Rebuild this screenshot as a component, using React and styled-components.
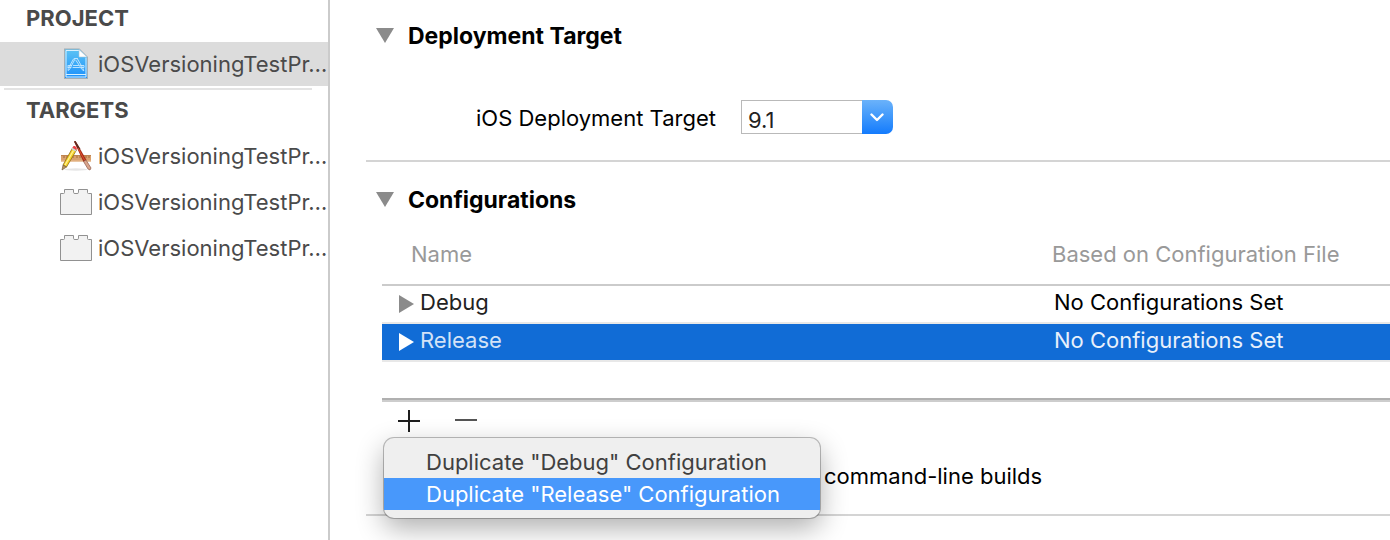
import React from "react";
import styled, { createGlobalStyle, css } from "styled-components";

const GlobalStyle = createGlobalStyle`
  * { box-sizing: border-box; }
  body {
    margin: 0;
    background: #fff;
    color: #000;
    font: 22px/28px Inter, "Liberation Sans", sans-serif;
    overflow: hidden;
  }
  button, input { font: inherit; color: inherit; }
`;

const Window = styled.div`
  display: grid;
  grid-template-columns: 330px 1fr;
  min-height: 100vh;
`;

/* Sidebar */

const Sidebar = styled.nav`
  border-right: 2px solid #cbcbcb;
  color: #4a4a4a;
`;

const SidebarHeading = styled.h2`
  margin: 0;
  padding: 4px 26px;
  font-size: 22px;
  line-height: 28px;
  font-weight: 700;
`;

const SidebarList = styled.ul`
  list-style: none;
  margin: 0;
  padding: 6px 0 0;
  display: grid;
  gap: 2px;
`;

const SidebarItem = styled.a`
  display: flex;
  align-items: center;
  gap: 6px;
  height: 44px;
  padding-left: 60px;
  color: inherit;
  text-decoration: none;
  white-space: nowrap;
  background: ${(p) => (p.$selected ? "#dcdcdc" : "transparent")};

  svg { flex: none; }
`;

const SidebarRule = styled.hr`
  height: 2px;
  margin: 2px 16px 2px 4px;
  border: 0;
  background: #e3e3e3;
`;

/* Editor */

const Editor = styled.main`
  min-width: 0;
  padding: 22px 0 0 36px;
`;

const Section = styled.section`
  border-bottom: 2px solid #d4d4d4;

  & + & { padding-top: 24px; }
`;

const SectionHeading = styled.h3`
  display: flex;
  align-items: center;
  gap: 14px;
  margin: 0;
  padding-left: 10px;
  font-size: 23px;
  line-height: 28px;
  font-weight: 700;
`;

const Field = styled.div`
  display: flex;
  align-items: center;
  gap: 24px;
  padding: 50px 0 26px 110px;
`;

const FieldLabel = styled.label`
  padding: 2px 1px 0 0;
`;

const ComboBox = styled.div`
  display: flex;
  width: 152px;
  height: 34px;
`;

const ComboInput = styled.input`
  flex: 1;
  min-width: 0;
  padding: 6px 6px 0;
  border: 1px solid #b9b9b9;
  border-right: 0;
  border-radius: 0;
  outline: none;
  color: #222;
  background: #fff;
`;

const ComboButton = styled.button`
  display: grid;
  place-items: center;
  width: 31px;
  padding: 0;
  border: 0;
  border-radius: 0 7px 7px 0;
  background: linear-gradient(#6bb2fa, #3f98fb 50%, #147bfd);
`;

const ConfigTable = styled.table`
  width: calc(100% - 16px);
  margin: 10px 0 0 16px;
  border-collapse: separate;
  border-spacing: 0;
  table-layout: fixed;
  border-bottom: 2px solid #cdcdcd;
`;

const HeaderCell = styled.th`
  width: ${(p) => (p.$name ? "641px" : "auto")};
  height: 62px;
  padding: 0 0 0 29px;
  border-bottom: 2px solid #cbcbcb;
  color: #999;
  font-weight: 400;
  text-align: left;
  white-space: nowrap;
`;

const selectedRow = css`
  background: #116cd6;
  color: #e8f0fb;
`;

const ConfigRow = styled.tr`
  ${(p) => p.$selected && selectedRow}
`;

const NameCell = styled.td`
  height: 38px;
  padding: 0 0 4px 16px;
  border-bottom: 2px solid #e8e8e8;

  &:empty { border-bottom-color: #b0b0b0; }
`;

const FileCell = styled(NameCell)`
  padding-left: 31px;
`;

const NameLabel = styled.span`
  display: flex;
  align-items: center;
  gap: 6px;
  color: ${(p) => (p.$selected ? "#d3e2f7" : "#222")};

  svg { margin-top: 3px; }
`;

const TableActions = styled.div`
  position: relative;
  display: flex;
  gap: 33px;
  padding: 7px 0 0 31px;
`;

const IconButton = styled.button`
  display: grid;
  place-items: center;
  width: 24px;
  height: 24px;
  padding: 0;
  border: 0;
  background: none;
`;

const Menu = styled.div`
  position: absolute;
  top: 36px;
  left: 18px;
  width: 436px;
  padding: 8px 0;
  border-radius: 10px;
  background: #efefef;
  box-shadow: 0 0 0 1px rgba(0, 0, 0, 0.25), 0 10px 28px rgba(0, 0, 0, 0.32);
`;

const MenuItem = styled.button`
  display: block;
  width: 100%;
  height: 32px;
  padding: 0 42px;
  border: 0;
  text-align: left;
  line-height: 28px;
  white-space: nowrap;
  color: ${(p) => (p.$highlighted ? "#fff" : "#404040")};
  background: ${(p) => (p.$highlighted ? "#4898fb" : "transparent")};
`;

const BuildNote = styled.p`
  margin: 0;
  padding: 29px 0 24px 458px;
  white-space: nowrap;
`;

/* Icons */

const OpenTriangle = () => (
  <svg width="18" height="16" viewBox="0 0 18 16" aria-hidden="true">
    <path d="M0 0h18L9 15z" fill="#8b8b8b" />
  </svg>
);

const ClosedTriangle = ({ color }) => (
  <svg width="16" height="18" viewBox="0 0 16 18" aria-hidden="true">
    <path d="M1 0v18l15-9z" fill={color} />
  </svg>
);

const ProjectIcon = () => (
  <svg width="32" height="32" viewBox="0 0 32 32" aria-hidden="true">
    <defs>
      <linearGradient id="doc" x1="0" y1="0" x2="0" y2="1">
        <stop offset="0" stopColor="#5cc3f4" />
        <stop offset="1" stopColor="#1c90fb" />
      </linearGradient>
    </defs>
    <path d="M4 .5h15.500L28 9v22H4z" fill="#7f8f9b" opacity=".6" />
    <path d="M5 1.500h14.500L27 9v21H5z" fill="url(#doc)" />
    <path d="M6 2.500h13M6 2.500V29H26V9.500M6 26.500h20" fill="none" stroke="#d9f1ff" strokeWidth="1" />
    <path d="M19 1.500V9h8z" fill="#fff" stroke="#a9c8d8" strokeWidth=".6" />
    <g fill="none" stroke="#c9eaff" strokeWidth=".9" strokeLinecap="round" strokeLinejoin="round">
      <path d="M14.500 10.500h3M15 11l-5.500 10.500-1.500 1 .2-2L13.500 11M17.500 11l5.500 9.500.8 2.300-1.800-1.300L16 12.500M8.500 17.500h3M13.500 17.500h5M20.500 17.500h3.500v2h-3M8 19.500h3M13 19.500h6.500M8 17.500v2" />
    </g>
  </svg>
);

const AppIcon = () => (
  <svg width="32" height="32" viewBox="0 0 32 32" aria-hidden="true">
    <ellipse cx="16" cy="29.500" rx="12" ry="1.200" fill="#000" opacity=".1" />
    <path d="M1 15h30v6.500H1z" fill="#d9a16e" />
    <path d="M1 15.500h30" stroke="#c08450" />
    <path d="M1 21h30" stroke="#e8bd91" />
    <path d="M4 16v2M7 16v2M10 16v2M13 16v2M17 16v2M20 16v2M23 16v2M26 16v2M29 16v2" stroke="#95602f" strokeWidth=".8" />
    <path d="M14 1.500l1.500-.5 11 19-3 2z" fill="#a62c17" />
    <path d="M14 1.500l1.500-.5 5 8-2 1z" fill="#5e2a20" />
    <path d="M18 8l6.500 12" stroke="#e0512c" strokeWidth="1" />
    <path d="M23.500 21.500l2.500-1.500 5 8-1 2-2-1z" fill="#d9a48b" stroke="#8c5a4b" strokeWidth=".7" />
    <path d="M12.500 8l4 2L6.500 27l-3.500-2z" fill="#f7d52b" stroke="#8f6c15" strokeWidth=".8" />
    <path d="M13.500 10.500L5 25" stroke="#fff29a" strokeWidth="1.200" />
    <path d="M3 25l3.500 2-4.500 3z" fill="#b79361" stroke="#6a5230" strokeWidth=".6" />
    <path d="M12.500 8c.5-2 1.500-2.500 3-1.500s1.500 2 1 3.500z" fill="#ed3f45" />
    <path d="M12 8.500l4 2.300" stroke="#cfd5da" strokeWidth="1.500" />
  </svg>
);

const BundleIcon = () => (
  <svg width="32" height="28" viewBox="0 0 32 28" aria-hidden="true">
    <path
      d="M.5 26.500V5.500H3.500Q4.500 5.500 4.500 4.500V1.500H13.500V4.500Q13.500 5.500 15 5.500H17Q18.500 5.500 18.500 4.500V1.500H27.500V4.500Q27.500 5.500 28.500 5.500H31.500V26.500z"
      fill="#f2f2f2"
      stroke="#919191"
    />
  </svg>
);

const ChevronIcon = () => (
  <svg width="14" height="9" viewBox="0 0 14 9" aria-hidden="true">
    <path d="M1.500 1.500L7 7l5.500-5.500" fill="none" stroke="#fff" strokeWidth="2.400" strokeLinecap="round" strokeLinejoin="round" />
  </svg>
);

const PlusIcon = () => (
  <svg width="22" height="22" viewBox="0 0 22 22" aria-hidden="true">
    <path d="M0 11h22M11 0v22" stroke="#1e1e1e" strokeWidth="2" />
  </svg>
);

const MinusIcon = () => (
  <svg width="22" height="22" viewBox="0 0 22 22" aria-hidden="true">
    <path d="M0 10h22" stroke="#555" strokeWidth="2" />
  </svg>
);

const configurations = [
  { name: "Debug", file: "No Configurations Set" },
  { name: "Release", file: "No Configurations Set", selected: true },
];

const targets = [AppIcon, BundleIcon, BundleIcon];

export default function App() {
  return (
    <>
      <GlobalStyle />
      <Window>
        <Sidebar>
          <SidebarHeading>PROJECT</SidebarHeading>
          <SidebarList>
            <li>
              <SidebarItem href="#project" $selected>
                <ProjectIcon />
                iOSVersioningTestPr…
              </SidebarItem>
            </li>
          </SidebarList>
          <SidebarRule />
          <SidebarHeading>TARGETS</SidebarHeading>
          <SidebarList>
            {targets.map((Icon, i) => (
              <li key={i}>
                <SidebarItem href={`#target-${i}`}>
                  <Icon />
                  iOSVersioningTestPr…
                </SidebarItem>
              </li>
            ))}
          </SidebarList>
        </Sidebar>

        <Editor>
          <Section>
            <SectionHeading>
              <OpenTriangle />
              Deployment Target
            </SectionHeading>
            <Field>
              <FieldLabel htmlFor="deployment">iOS Deployment Target</FieldLabel>
              <ComboBox>
                <ComboInput id="deployment" defaultValue="9.1" />
                <ComboButton aria-label="Show versions">
                  <ChevronIcon />
                </ComboButton>
              </ComboBox>
            </Field>
          </Section>

          <Section>
            <SectionHeading>
              <OpenTriangle />
              Configurations
            </SectionHeading>
            <ConfigTable>
              <thead>
                <tr>
                  <HeaderCell $name>Name</HeaderCell>
                  <HeaderCell>Based on Configuration File</HeaderCell>
                </tr>
              </thead>
              <tbody>
                {configurations.map((c) => (
                  <ConfigRow key={c.name} $selected={c.selected}>
                    <NameCell>
                      <NameLabel $selected={c.selected}>
                        <ClosedTriangle color={c.selected ? "#fff" : "#8b8b8b"} />
                        {c.name}
                      </NameLabel>
                    </NameCell>
                    <FileCell>{c.file}</FileCell>
                  </ConfigRow>
                ))}
                <ConfigRow>
                  <NameCell />
                  <FileCell />
                </ConfigRow>
              </tbody>
            </ConfigTable>
            <TableActions>
              <IconButton aria-label="Add configuration">
                <PlusIcon />
              </IconButton>
              <IconButton aria-label="Remove configuration">
                <MinusIcon />
              </IconButton>
              <Menu role="menu">
                <MenuItem role="menuitem">Duplicate "Debug" Configuration</MenuItem>
                <MenuItem role="menuitem" $highlighted>
                  Duplicate "Release" Configuration
                </MenuItem>
              </Menu>
            </TableActions>
            <BuildNote>command-line builds</BuildNote>
          </Section>
        </Editor>
      </Window>
    </>
  );
}
